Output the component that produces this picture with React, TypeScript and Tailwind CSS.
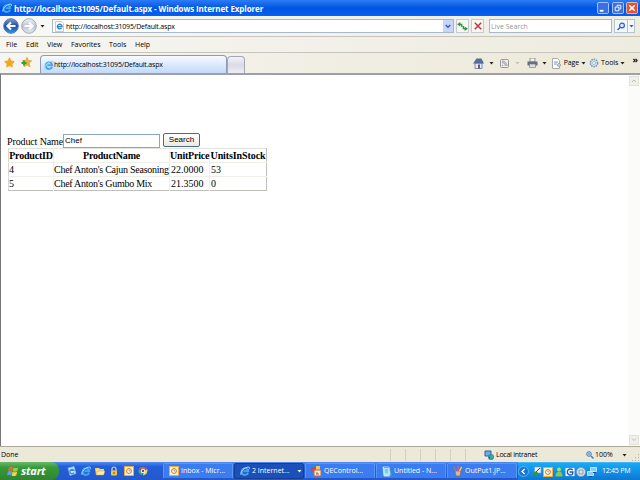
import React from 'react';
import { FaStar } from 'react-icons/fa';

function IeLogo({ size = 9 }: { size?: number }) {
  return (
    <svg width={size} height={size} viewBox="0 0 18 18" className="shrink-0">
      <path d="M14.5 12.5A6 6 0 1 1 15 9.5H6" fill="none" stroke="#43a5ee" strokeWidth="3.6" />
      <path d="M2 16C-1 12 8 1 16 2c2 .3 1 3 0 4" fill="none" stroke="#a9dcf8" strokeWidth="1.8" />
    </svg>
  );
}

function Caret({ className = 'text-[#222]' }: { className?: string }) {
  return (
    <svg width="5" height="3" viewBox="0 0 5 3" className={`shrink-0 ${className}`}>
      <path d="M0.5 0h4L2.5 2.6z" fill="currentColor" />
    </svg>
  );
}

function NavArrow({ forward = false }: { forward?: boolean }) {
  return (
    <svg width="16" height="16" viewBox="0 0 16 16" className="shrink-0">
      <defs>
        <linearGradient id="backFill" x1="0" y1="0" x2="0" y2="1">
          <stop offset="0" stopColor="#7f9fd4" />
          <stop offset="0.5" stopColor="#1a4ba8" />
          <stop offset="1" stopColor="#2b9be4" />
        </linearGradient>
        <linearGradient id="forwardFill" x1="0" y1="0" x2="0" y2="1">
          <stop offset="0" stopColor="#f2f4f8" />
          <stop offset="0.5" stopColor="#b9c3d3" />
          <stop offset="1" stopColor="#e4eaf2" />
        </linearGradient>
      </defs>
      <circle cx="8" cy="8" r="7.3" fill={forward ? 'url(#forwardFill)' : 'url(#backFill)'} stroke={forward ? '#a3abb8' : '#5b79aa'} />
      <path
        d={forward ? 'M3.5 8h8M8 4.5 11.7 8 8 11.5' : 'M12.5 8h-8M8 4.5 4.3 8 8 11.5'}
        fill="none"
        stroke="#fff"
        strokeWidth="2"
      />
    </svg>
  );
}

function TitleBar() {
  return (
    <div className="flex h-4 shrink-0 items-center bg-linear-to-b from-[#2b7cf5] via-[#0054e3] to-[#0560f5] pl-[2px] pr-[2px] text-white">
      <IeLogo size={10} />
      <span className="ml-[2px] flex-1 whitespace-nowrap pt-px text-[8px] font-bold tracking-[-0.1px]">
        http://localhost:31095/Default.aspx - Windows Internet Explorer
      </span>
      <div className="flex gap-[2.5px]">
        <svg width="12" height="12" viewBox="0 0 13 13">
          <rect x=".5" y=".5" width="12" height="12" rx="1.5" fill="#3a70e4" stroke="#b9cdf8" />
          <path d="M3 9.5h4" stroke="#fff" strokeWidth="2" />
        </svg>
        <svg width="12" height="12" viewBox="0 0 13 13">
          <rect x=".5" y=".5" width="12" height="12" rx="1.5" fill="#3a70e4" stroke="#b9cdf8" />
          <path d="M5.5 5V3.5h4v4H8M3.5 5.5h4v4h-4z" fill="none" stroke="#fff" />
        </svg>
        <svg width="12" height="12" viewBox="0 0 13 13">
          <rect x=".5" y=".5" width="12" height="12" rx="1.5" fill="#e25431" stroke="#f2c0b0" />
          <path d="m3.5 3.5 6 6m0-6-6 6" stroke="#fff" strokeWidth="1.7" />
        </svg>
      </div>
    </div>
  );
}

function AddressBar() {
  return (
    <div className="flex h-5 shrink-0 items-center bg-linear-to-r from-[#f8f8f6] to-[#efede0] pl-[3px] pr-1">
      <NavArrow />
      <div className="ml-[2px] flex"><NavArrow forward /></div>
      <div className="ml-[3px] flex"><Caret /></div>
      <div className="ml-[7px] flex h-[14px] w-[402px] items-center border border-[#a9b8c9] bg-white">
        <svg width="11" height="11" viewBox="0 0 11 11" className="ml-[1px]">
          <path d="M1.5.5h6l2 2v8h-8z" fill="#fff" stroke="#b5b5b5" strokeWidth=".7" />
          <path d="M7.5 7A2.3 2.3 0 1 1 8 5.6H3.6" fill="none" stroke="#2b7fc8" strokeWidth="1.4" />
        </svg>
        <span className="ml-px flex-1 whitespace-nowrap pt-[2px] text-[7px] tracking-[-0.18px]">http://localhost:31095/Default.aspx</span>
        <div className="flex h-3 w-[10px] items-center justify-center bg-[#c5d6fa]">
          <svg width="6" height="5" viewBox="0 0 6 5"><path d="m.7 1 2.3 2.3L5.3 1" fill="none" stroke="#405d91" strokeWidth="1.4" /></svg>
        </div>
      </div>
      <div className="ml-[2px] flex h-[14px] w-[13px] items-center justify-center border border-[#c4cbd2] bg-[#f7f7f4]">
        <svg width="11" height="9" viewBox="0 0 11 9" className="shrink-0">
          <path d="M3.4 0v4.6L0 2.3zM7.6 4.4V9L11 6.7z" fill="#2d983a" />
          <path d="M3 2.3h1.7v2.8M8 6.7H6.300V3.900" fill="none" stroke="#2d983a" strokeWidth="1.3" />
        </svg>
      </div>
      <div className="ml-[2px] flex h-[14px] w-[13px] items-center justify-center border border-[#c4cbd2] bg-[#f7f7f4]">
        <svg width="8" height="8" viewBox="0 0 7 7"><path d="m.7.7 5.6 5.6m0-5.6L.7 6.3" stroke="#c33338" strokeWidth="1.3" /></svg>
      </div>
      <div className="ml-[5px] flex h-[14px] w-[123px] items-center border border-[#a9b8c9] bg-white pl-px">
        <span className="pt-[2px] text-[7px] text-[#999]">Live Search</span>
      </div>
      <div className="ml-[2px] flex h-[14px] w-[21px] items-center border border-[#b5c4d2] bg-[#f4f7fa]">
        <svg width="12" height="9" viewBox="0 0 12 9"><circle cx="7" cy="3.5" r="2.4" fill="#dcebff" stroke="#2766c6" strokeWidth="1.2" /><path d="M5 5.5 2.5 8" stroke="#2766c6" strokeWidth="1.5" /></svg>
        <div className="flex h-3 items-center border-l border-[#b5c4d2] pl-px"><Caret className="text-[#3660a0]" /></div>
      </div>
    </div>
  );
}

function MenuBar() {
  return (
    <div className="flex h-4 shrink-0 items-center border-t border-[#c5c5bd] bg-linear-to-r from-[#f6f5f1] to-[#eeecdf] pl-[6px] pt-[2px] text-[7px]">
      <span className="w-5">File</span>
      <span className="w-[21px]">Edit</span>
      <span className="w-6">View</span>
      <span className="w-[38px]">Favorites</span>
      <span className="w-[26px]">Tools</span>
      <span>Help</span>
    </div>
  );
}

function TabBar() {
  return (
    <div className="flex h-[21px] shrink-0 border-t border-[#c5c5bd] bg-linear-to-r from-[#f6f5f1] to-[#ece9d8]">
      <div className="flex w-[40px] items-center gap-[6px] pb-[2px] pl-1">
        <FaStar size={11} color="#f6a522" />
        <svg width="11" height="11" viewBox="0 0 11 11">
          <path d="m6 .3 1.4 3.2 3.4.3-2.6 2.3.8 3.7L6 7.9 3 9.8l.8-3.7L1.2 3.8l3.4-.3z" fill="#f3b233" stroke="#cf8c24" strokeWidth=".5" />
          <path d="M.5 6h5M3 3.5v5" stroke="#35a13a" strokeWidth="1.9" />
        </svg>
      </div>
      <div className="mt-[2px] flex w-[187px] items-center rounded-t-sm border border-b-0 border-[#929bad] bg-linear-to-b from-[#f7faff] to-[#c3d9fb] pl-[3px]">
        <IeLogo size={10} />
        <span className="whitespace-nowrap pt-px text-[7px] tracking-[-0.18px]">http://localhost:31095/Default.aspx</span>
      </div>
      <div className="mt-[3px] w-[18px] rounded-t-sm border border-b-0 border-[#a5a5b5] bg-linear-to-b from-[#f3f3f6] via-[#dadae8] to-[#eeeef5]" />
      <div className="flex flex-1 items-center justify-end pr-[2px] text-[7px]">
        <svg width="11" height="11" viewBox="0 0 11 11">
          <path d="M2 5h7v5.5H2z" fill="#e3eaf5" stroke="#557aa8" strokeWidth=".8" />
          <path d="m0 5.5 3.5-5h5l2.5 5z" fill="#526d9b" />
          <path d="M5 6.5h2v4H5z" fill="#7c5660" />
        </svg>
        <div className="ml-[5px] flex"><Caret /></div>
        <svg width="9" height="9" viewBox="0 0 9 9" className="ml-[6px]"><rect x=".5" y=".5" width="8" height="8" rx="1" fill="#eee" stroke="#999" /><path d="M2 3.5A3.5 3.5 0 0 1 5.5 7M2 2a5 5 0 0 1 5 5" fill="none" stroke="#999" /><circle cx="2.5" cy="6.5" r=".7" fill="#999" /></svg>
        <div className="ml-[6px] flex"><Caret className="text-[#c0c0b8]" /></div>
        <svg width="11" height="10" viewBox="0 0 11 10" className="ml-[7px]"><path d="M3 0h5v4H3z" fill="#eee" stroke="#777" strokeWidth=".7" /><path d="M.5 3.5h10v4H.5z" fill="#686d76" /><path d="M2.5 6h6v3.5h-6z" fill="#ddd" stroke="#777" strokeWidth=".6" /></svg>
        <div className="ml-[4px] flex"><Caret /></div>
        <svg width="11" height="11" viewBox="0 0 11 11" className="ml-[4px]"><path d="M1.5.5h5l2 2v8h-7z" fill="#fff" stroke="#aaa" /><path d="M3 4h4M3 6h3" stroke="#6d98c5" /><circle cx="8" cy="7" r="1.5" fill="#ddd" stroke="#888" strokeWidth=".7" /></svg>
        <span className="ml-[2px] mr-[2px] tracking-[-0.1px]">Page</span>
        <Caret />
        <svg width="10" height="10" viewBox="0 0 10 10" className="ml-[3px]"><circle cx="5" cy="5" r="3.6" fill="#d9e7f6" stroke="#7b99bc" strokeWidth="1.6" strokeDasharray="1.6 .7" /><circle cx="5" cy="5" r="1.5" fill="#fff" stroke="#8ba9c8" strokeWidth=".7" /></svg>
        <span className="ml-[2px] mr-[2px]">Tools</span>
        <Caret />
        <span className="mb-2 ml-[7px] text-[9px] font-bold leading-none">»</span>
      </div>
    </div>
  );
}

function ProductSearch() {
  const products = [
    { id: 4, name: "Chef Anton's Cajun Seasoning", price: '22.0000', stock: 53 },
    { id: 5, name: "Chef Anton's Gumbo Mix", price: '21.3500', stock: 0 },
  ];

  return (
    <div className="flex-1 pl-[6px] pt-[57px] font-['Liberation_Serif',serif] text-[10px]">
      <div className="flex h-[16px] items-start">
        <span className="w-[56px] whitespace-nowrap pt-[5px] leading-none tracking-[-0.12px]">Product Name</span>
        <div className="mt-[2px] flex h-[14px] w-[97px] items-center border border-[#8ca6bd] pl-px font-['Liberation_Sans',sans-serif] text-[8px]">Chef</div>
        <button className="ml-[3px] mt-px h-[14px] w-[37px] rounded-[2px] border border-[#486a94] bg-linear-to-b from-white to-[#ece9df] font-['Liberation_Sans',sans-serif] text-[8px] leading-none">Search</button>
      </div>
      <table className="ml-px w-[259px] table-fixed border-collapse border border-t-[#e4e4de] border-b-[#c0c0bb] border-l-[#d8d8d2] border-r-[#c0c0bb] leading-none">
        <colgroup><col className="w-[45px]" /><col className="w-[116px]" /><col className="w-[40px]" /><col /></colgroup>
        <thead>
          <tr className="h-[14px] tracking-[-0.2px]">
            {['ProductID', 'ProductName', 'UnitPrice', 'UnitsInStock'].map((name) => (
              <th key={name} className="whitespace-nowrap border-r border-[#efefe8] p-0 last:border-r-0 last:tracking-[-0.1px]">{name}</th>
            ))}
          </tr>
        </thead>
        <tbody>
          {products.map((p) => (
            <tr key={p.id} className="h-[14px] border-t border-[#efefe8]">
              <td className="border-r border-[#efefe8] p-0">{p.id}</td>
              <td className="whitespace-nowrap border-r border-[#efefe8] p-0 tracking-[-0.26px]">{p.name}</td>
              <td className="border-r border-[#efefe8] p-0 pl-px">{p.price}</td>
              <td className="p-0 pl-px">{p.stock}</td>
            </tr>
          ))}
        </tbody>
      </table>
    </div>
  );
}

function ScrollButton({ down = false }: { down?: boolean }) {
  return (
    <div className="flex h-[10px] w-[10px] items-center justify-center border border-[#e3e2da] bg-[#f0efe9]">
      <svg width="6" height="4" viewBox="0 0 6 4"><path d={down ? 'm1 .5 2 2 2-2' : 'm1 3 2-2 2 2'} fill="none" stroke="#bdbcb2" /></svg>
    </div>
  );
}

function StatusBar() {
  return (
    <div className="flex h-4 shrink-0 items-center border-t border-[#aca899] bg-[#ece9d8] pl-px pt-px text-[7px]">
      <span className="w-[389px]">Done</span>
      {[0, 1, 2, 3, 4, 5].map((n) => <div key={n} className="h-3 w-[15px] border-l border-[#d2cfbf]" />)}
      <svg width="11" height="11" viewBox="0 0 11 11" className="ml-[4px]"><path d="M1 1h6v5H1z" fill="#6aafe8" stroke="#345f9a" /><circle cx="7" cy="7" r="3" fill="#278cc4" /><path d="m5 6 2 1-1 2M8 5v3" stroke="#5ec756" /></svg>
      <span className="ml-px w-[90px] whitespace-nowrap tracking-[-0.25px]">Local intranet</span>
      <svg width="8" height="8" viewBox="0 0 8 8"><circle cx="3" cy="3" r="2.3" fill="#e7f2ff" stroke="#3d79b8" /><path d="m5 5 2.5 2.5" stroke="#3d79b8" strokeWidth="1.4" /><path d="M1.5 3h3M3 1.5v3" stroke="#238ed7" strokeWidth=".7" /></svg>
      <span className="ml-px w-[27px]">100%</span>
      <Caret />
      <svg width="8" height="8" viewBox="0 0 8 8" className="ml-auto mt-1"><path d="M6 1h1v1H6zM6 4h1v1H6zM3 4h1v1H3zM6 7h1v1H6zM3 7h1v1H3zM0 7h1v1H0z" fill="#b8b4a3" /></svg>
    </div>
  );
}

function OutlookIcon() {
  return (
    <svg width="10" height="10" viewBox="0 0 10 10" className="shrink-0"><path d="M.5.5h9v9h-9z" fill="#fff0c5" stroke="#f2a83b" /><circle cx="5" cy="5" r="2.4" fill="#fff" stroke="#bd7b25" /><path d="M5 3.5V5h1.3" fill="none" stroke="#777" strokeWidth=".7" /></svg>
  );
}

function WindowsFlag() {
  return (
    <svg width="12" height="11" viewBox="0 0 12 11" className="shrink-0">
      <path d="M2 1.2C3.5.3 4.5.5 6 1.2L5.2 5C3.8 4.3 2.5 4.2 1.1 5z" fill="#ef6437" />
      <path d="M6.5 1.4c1.5.8 3 .8 4.7 0L10.3 5c-1.5.9-3 .9-4.6.2z" fill="#8fd14c" />
      <path d="M1 5.6c1.4-.8 2.7-.7 4.1 0l-.9 3.8C2.8 8.7 1.5 8.6.1 9.4z" fill="#5ba3f5" />
      <path d="M5.6 5.8c1.5.7 3 .7 4.6-.1l-1 3.8c-1.5.8-3 .8-4.5.1z" fill="#ffd044" />
    </svg>
  );
}

function QuickLaunch() {
  return (
    <div className="flex w-[104px] items-center gap-[4px] pl-[8px]">
      <svg width="10" height="10" viewBox="0 0 10 10"><path d="m1 2 6-1.5 2 7-6 2z" fill="#c2e4fc" stroke="#7fb7ed" strokeWidth=".7" /><path d="M7 6.500A2.200 2.200 0 1 1 7 4.500H3.500" fill="none" stroke="#3c8bd7" strokeWidth="1.200" /></svg>
      <IeLogo size={10} />
      <svg width="10" height="10" viewBox="0 0 10 10"><path d="M0 2h4l1 1h4v6H1z" fill="#f5d778" /><path d="M3 5h7L8.5 9H1z" fill="#fff0b0" stroke="#c69c38" strokeWidth=".5" /></svg>
      <svg width="10" height="10" viewBox="0 0 10 10"><path d="M3 5V3a2 2 0 0 1 4 0v2" fill="none" stroke="#ddd5b5" strokeWidth="1.2" /><rect x="2" y="4.5" width="6" height="5" rx="1" fill="#efc44c" /><path d="M5 6v2" stroke="#6d5520" /></svg>
      <div className="flex pl-px"><OutlookIcon /></div>
      <svg width="10" height="10" viewBox="0 0 10 10"><path d="M1 2.5A5 5 0 0 1 9 3L5 4z" fill="#e95536" /><path d="M9.2 3A5 5 0 0 1 5 9.5L6 5z" fill="#f1d556" /><path d="M.8 3A5 5 0 0 0 4.5 9.5L4 5z" fill="#50aa5a" /><circle cx="5" cy="5" r="2.2" fill="#fff" /><circle cx="5" cy="5" r="1.3" fill="#3764b5" /></svg>
    </div>
  );
}

function TaskButton({ icon, label, active = false }: { icon: React.ReactNode; label: string; active?: boolean }) {
  return (
    <div className={`mr-px flex h-4 w-[70px] shrink-0 items-center rounded-[2px] border pl-[5px] ${active ? 'border-[#153e94] bg-[#1d4fb8]' : 'border-[#5b95f7] border-b-[#2558c9] bg-[#3b7cf0]'}`}>
      {icon}
      <span className="ml-[2px] flex-1 whitespace-nowrap">{label}</span>
      {active && <div className="pr-[1px]"><Caret className="text-white" /></div>}
    </div>
  );
}

function Tray() {
  return (
    <div className="flex h-full flex-1 items-center gap-px border-t border-[#43b6f5] bg-linear-to-b from-[#18aaf0] via-[#1290e6] to-[#0e78ce]">
      <svg width="11" height="11" viewBox="0 0 11 11" className="mr-[2px] shrink-0"><circle cx="5.5" cy="5.5" r="5" fill="#1b74db" stroke="#73bdf6" strokeWidth=".8" /><path d="M6.7 3 4 5.5 6.7 8" fill="none" stroke="#fff" strokeWidth="1.3" /></svg>
      <svg width="10" height="11" viewBox="0 0 10 11" className="shrink-0"><path d="M2.5 1H9v6H2.5z" fill="#e8eef5" stroke="#8798a8" strokeWidth=".6" /><path d="m4 6 4-4" stroke="#444" /><circle cx="3.5" cy="8" r="2.4" fill="#36933e" /></svg>
      <OutlookIcon />
      <svg width="10" height="10" viewBox="0 0 10 10" className="shrink-0"><circle cx="5" cy="2.5" r="2" fill="#a4dd78" /><path d="M1.5 9.5C1.5 6 3 4.8 5 4.8S8.5 6 8.5 9.5z" fill="#7dcb5b" /></svg>
      <svg width="10" height="10" viewBox="0 0 11 10" className="shrink-0"><path d="M.5.5h10v9H.5z" fill="#f3f7ff" /><path d="M8.5 3A3.3 3.3 0 1 0 8.5 7V5H5" fill="none" stroke="#2355ae" strokeWidth="1.5" /></svg>
      <svg width="10" height="10" viewBox="0 0 10 10" className="shrink-0"><circle cx="5" cy="5" r="4.5" fill="#dce3ea" stroke="#8795a5" strokeWidth=".7" /><path d="M3 3h4v4H3z" fill="none" stroke="#687b8f" strokeWidth=".7" /></svg>
      <svg width="10" height="10" viewBox="0 0 10 10" className="shrink-0"><path d="M3.5.5h6v4h-6zM.5 4.5h6v4h-6z" fill="#8cc9fb" stroke="#d8edff" strokeWidth=".8" /><path d="M2 9.5h3M6 5.5h3" stroke="#184d8e" /></svg>
      <span className="ml-[4px] whitespace-nowrap tracking-[-0.25px]">12:45 PM</span>
    </div>
  );
}

function Taskbar() {
  return (
    <div className="flex h-[18px] shrink-0 items-center bg-linear-to-b from-[#4d8df2] via-[#245edb] via-25% to-[#2458cc] text-[7px] text-white">
      <div className="flex h-full w-[59px] items-center rounded-r-lg bg-linear-to-b from-[#6aba69] via-[#379a38] via-30% to-[#2f8431] pl-[7px]">
        <WindowsFlag />
        <span className="mb-[2px] ml-[2px] text-[11px] font-bold italic leading-none tracking-[-0.2px]">start</span>
      </div>
      <QuickLaunch />
      <TaskButton label="Inbox - Micr..." icon={<OutlookIcon />} />
      <TaskButton active label="2 Internet..." icon={<IeLogo size={10} />} />
      <TaskButton
        label="QEControl..."
        icon={<svg width="11" height="11" viewBox="0 0 11 11" className="shrink-0"><path d="M0 1h5v4H0z" fill="#d94633" /><path d="M5 0h4v5H5z" fill="#f1c84d" /><path d="M3 4h7v6H3z" fill="#f6ebdd" stroke="#bd6b3b" /><path d="M5 8h3M6 6v2" stroke="#ca5636" /></svg>}
      />
      <TaskButton
        label="Untitled - N..."
        icon={<svg width="10" height="11" viewBox="0 0 10 11" className="shrink-0"><path d="M1 1h6l1 9H2z" fill="#a9e4f4" stroke="#e7faff" strokeWidth=".7" /><path d="M2 1.5h5M3 4h3M3 6h3" stroke="#4b91aa" strokeWidth=".7" /><path d="m8 4 1 5-2 1" fill="none" stroke="#6cabbc" /></svg>}
      />
      <TaskButton
        label="OutPut1.JP..."
        icon={<svg width="10" height="11" viewBox="0 0 10 11" className="shrink-0"><path d="M2 5h6l-1 5H3z" fill="#d8b991" stroke="#876244" strokeWidth=".6" /><path d="m3 5-2-4M5 5V0" stroke="#eb5e4e" strokeWidth="1.3" /><path d="m6.5 5 2-4" stroke="#f4cd4a" strokeWidth="1.5" /></svg>}
      />
      <Tray />
    </div>
  );
}

export default function App() {
  return (
    <div className="flex h-[480px] w-[640px] flex-col overflow-hidden bg-white font-['Open_Sans',sans-serif] text-black">
      <TitleBar />
      <AddressBar />
      <MenuBar />
      <TabBar />
      <div className="flex min-h-0 flex-1 border-l border-t-2 border-l-[#777] border-t-[#9da0aa]">
        <ProductSearch />
        <div className="flex w-3 flex-col items-center justify-between bg-[#fbfbf9] py-px"><ScrollButton /><ScrollButton down /></div>
      </div>
      <StatusBar />
      <Taskbar />
    </div>
  );
}
